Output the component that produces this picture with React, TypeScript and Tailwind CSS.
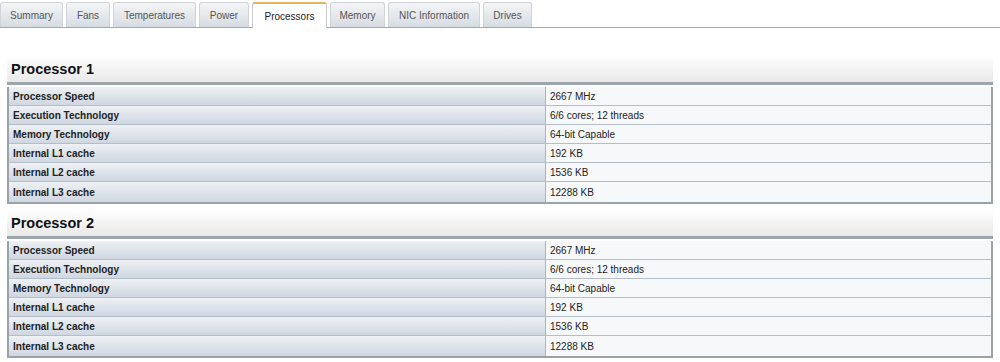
import React from 'react';

const tabs: [string, string][] = [
  ['Summary', 'w-[63px]'],
  ['Fans', 'w-[44px]'],
  ['Temperatures', 'w-[83px]'],
  ['Power', 'w-[50px]'],
  ['Processors', 'w-[75px]'],
  ['Memory', 'w-[55px]'],
  ['NIC Information', 'w-[92px]'],
  ['Drives', 'w-[49px]'],
];

const rows: [string, string][] = [
  ['Processor Speed', '2667 MHz'],
  ['Execution Technology', '6/6 cores; 12 threads'],
  ['Memory Technology', '64-bit Capable'],
  ['Internal L1 cache', '192 KB'],
  ['Internal L2 cache', '1536 KB'],
  ['Internal L3 cache', '12288 KB'],
];

const ProcessorTable: React.FC<{ title: string; first?: boolean }> = ({ title, first }) => {
  return (
    <div className={first ? 'mt-[28px]' : 'mt-[6px]'}>
      <div className="h-[29px] flex items-center pl-[4px] bg-gradient-to-b from-white to-[#e8e8e8] border-b-[3px] border-[#9aa5ad]">
        <h2 className="text-[14.5px] font-bold text-[#111] leading-none">{title}</h2>
      </div>
      <div className="mt-[2px] border-2 border-t-0 border-[#9aa3aa]">
        {rows.map(([label, value], i) => (
          <div
            key={label}
            className={`flex h-[19px] ${i < rows.length - 1 ? 'border-b border-[#b4bec8]' : 'h-[20px]'}`}
          >
            <div className="w-[537px] shrink-0 flex items-center pl-[4px] bg-gradient-to-b from-[#eef1f5] to-[#cfd7e1] border-r border-[#a9b4bf] text-[10px] font-bold text-[#222]">
              {label}
            </div>
            <div className="flex-1 flex items-center pl-[4px] bg-[#f6f8fa] text-[10px] text-[#222]">
              {value}
            </div>
          </div>
        ))}
      </div>
    </div>
  );
};

export default function App() {
  return (
    <div className="w-[1000px] h-[362px] bg-white overflow-hidden" style={{ fontFamily: '"Liberation Sans", Arial, sans-serif' }}>
      <div className="flex items-end gap-[3px] h-[28px] border-b border-[#a8a8a8] pt-[3px]">
        {tabs.map(([t, w]) => {
          const active = t === 'Processors';
          return (
            <div
              key={t}
              className={
                active
                  ? `${w} h-[26px] -mb-px flex items-center justify-center bg-white border border-b-0 border-[#c9c9c9] border-t-2 border-t-[#e4b45a] rounded-t-[3px] text-[10px] text-[#222]`
                  : `${w} h-[25px] flex items-center justify-center bg-gradient-to-b from-[#f4f5f6] to-[#d6dce2] border border-b-0 border-[#d0d4d8] rounded-t-[3px] text-[10px] text-[#555]`
              }
            >
              {t}
            </div>
          );
        })}
      </div>
      <div className="px-[7px]">
        <ProcessorTable title="Processor 1" first />
        <ProcessorTable title="Processor 2" />
      </div>
    </div>
  );
}
